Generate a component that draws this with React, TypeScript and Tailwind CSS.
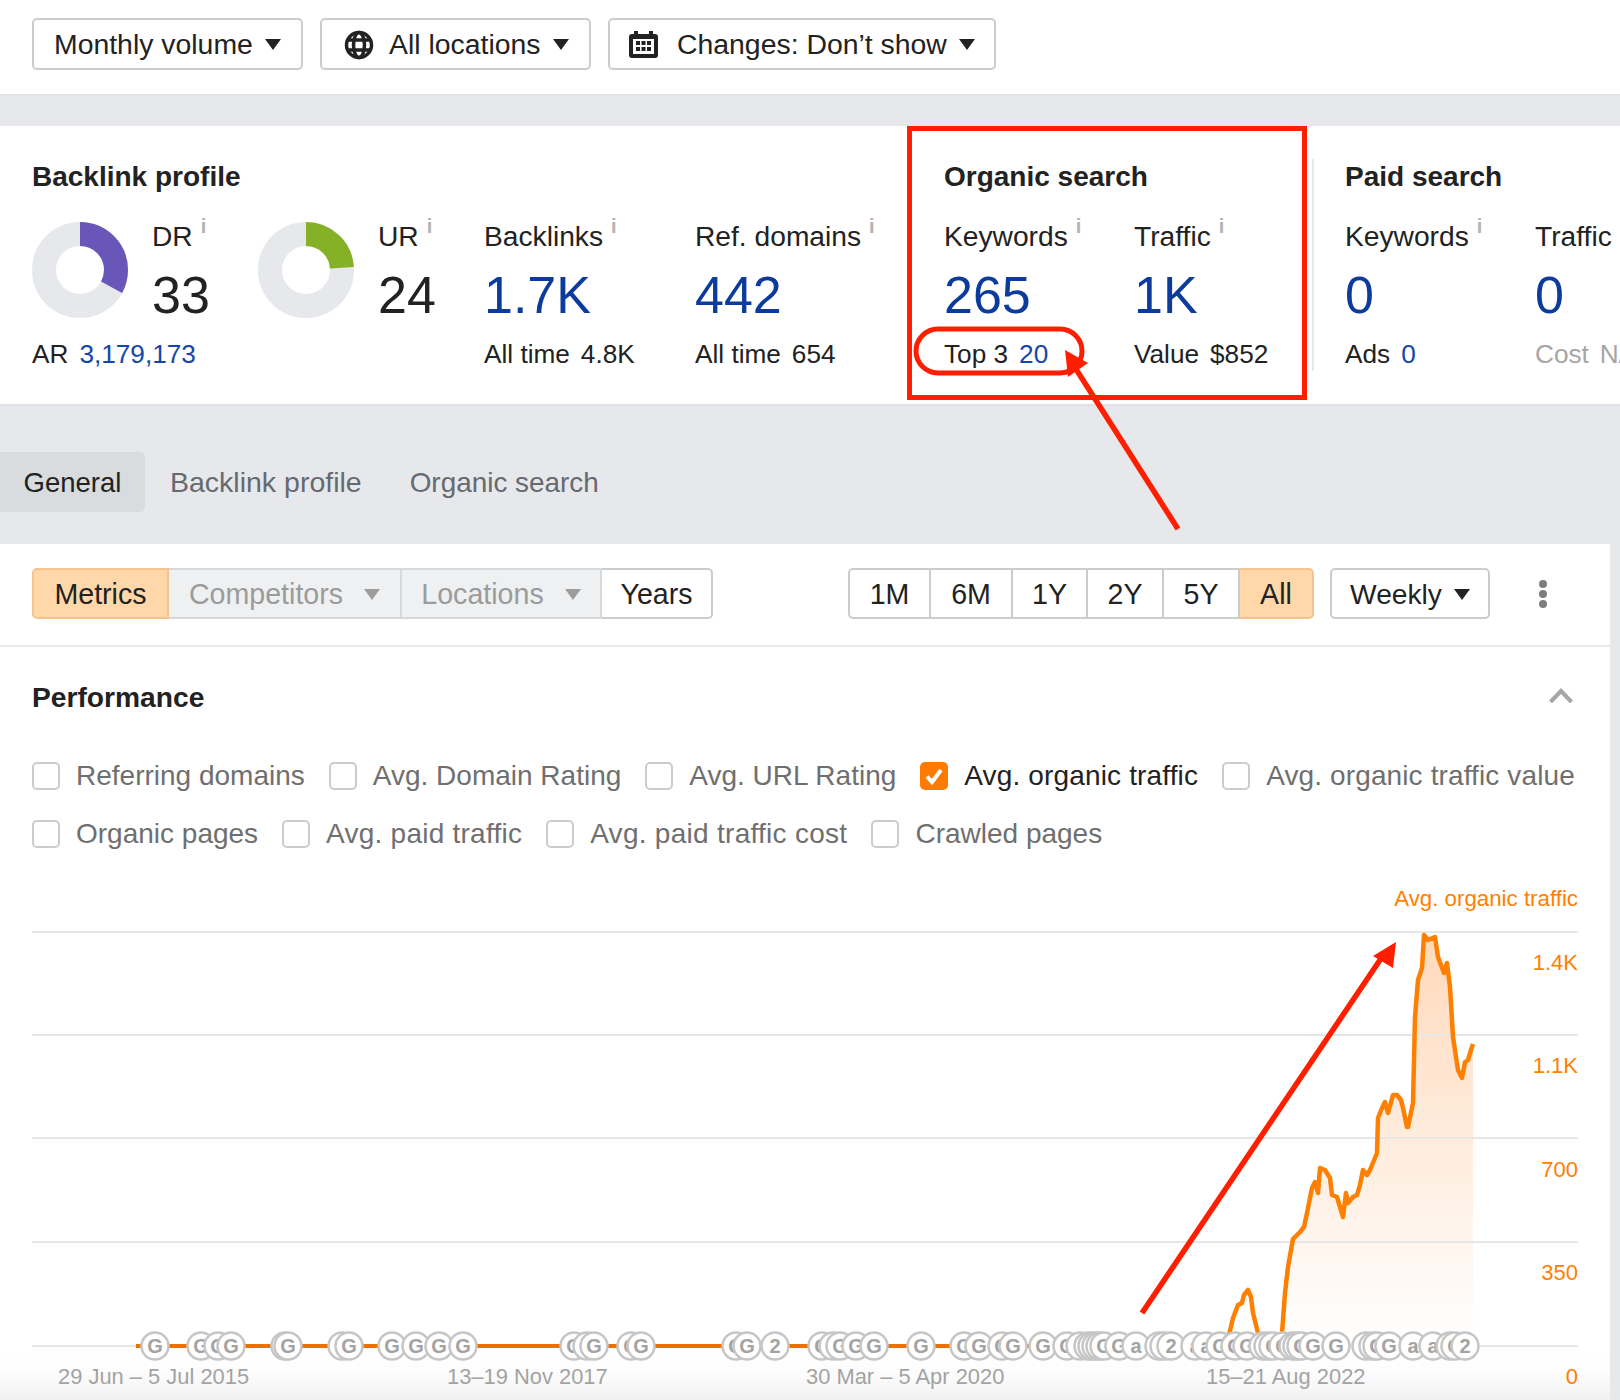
const marks: [number, string][] = [
  [155, "G"], [201, "G"], [218, "G"], [231, "G"], [285, "G"], [288, "G"], [342, "G"], [349, "G"],
  [392, "G"], [416, "G"], [439, "G"], [463, "G"], [574, "G"], [587, "G"], [594, "G"], [631, "G"],
  [641, "G"], [736, "G"], [747, "G"], [775, "2"], [822, "G"], [833, "G"], [840, "G"], [856, "G"],
  [874, "G"], [921, "G"], [964, "G"], [979, "G"], [1002, "G"], [1013, "G"], [1043, "G"], [1067, "G"],
  [1080, "a"], [1088, "G"], [1092, "G"], [1096, "2"], [1100, "G"], [1104, "G"], [1119, "G"], [1136, "a"],
  [1159, "G"], [1164, "G"], [1171, "2"], [1195, "a"], [1206, "a"], [1220, "G"], [1235, "G"], [1247, "G"],
  [1263, "G"], [1268, "G"], [1273, "G"], [1283, "G"], [1293, "G"], [1297, "G"], [1301, "G"], [1313, "G"],
  [1336, "G"], [1366, "G"], [1373, "G"], [1377, "G"], [1389, "G"], [1413, "a"], [1433, "a"], [1450, "G"],
  [1455, "G"], [1465, "2"],
];

const bump =
  "M1229 1335L1233 1318L1238 1305L1242 1303L1244 1295L1248 1290L1251 1297L1253 1313L1258 1333";
const rise =
  "L1285 1293L1288 1267L1293 1239L1300 1232L1304 1227L1307 1213L1312 1188L1315 1182L1318 1193L1320 1168L1325 1170L1330 1178L1332 1195L1337 1197L1343 1217L1346 1193L1348 1203L1353 1197L1357 1195L1360 1185L1363 1170L1367 1175L1370 1170L1377 1153L1378 1118L1382 1108L1385 1102L1388 1113L1393 1095L1397 1095L1401 1100L1403 1108L1407 1127L1408 1127L1413 1103L1415 1017L1418 980L1422 968L1424 935L1428 940L1435 937L1438 957L1444 973L1447 963L1450 987L1453 1037L1456 1057L1458 1070L1462 1078L1465 1062L1468 1060L1471 1050L1473 1044";

const Caret = ({ color = "#222222" }: { color?: string }) => (
  <svg width="16" height="11" viewBox="0 0 16 11" className="shrink-0">
    <path d="M0 0h16L8 11z" fill={color} />
  </svg>
);

const Globe = () => (
  <svg width="30" height="30" viewBox="0 0 30 30" fill="none" stroke="#222222" strokeWidth="3.500">
    <circle cx="15" cy="15" r="12.500" />
    <ellipse cx="15" cy="15" rx="5.500" ry="12.500" />
    <path d="M4 10h22M4 20h22" />
  </svg>
);

const Calendar = () => (
  <svg width="29" height="27" viewBox="0 0 29 27">
    <path
      d="M5 0h4v3h11V0h4v3h2a3 3 0 0 1 3 3v18a3 3 0 0 1-3 3H3a3 3 0 0 1-3-3V6a3 3 0 0 1 3-3h2z"
      fill="#222222"
    />
    <rect x="4" y="8" width="21" height="15" fill="#ffffff" />
    <path
      d="M7 10h4v4H7zM12.500 10h4v4h-4zM18 10h4v4h-4zM7 16h4v4H7zM12.500 16h4v4h-4zM18 16h4v4h-4z"
      fill="#222222"
    />
  </svg>
);

const TopButton = ({ width, children }: { width: string; children: React.ReactNode }) => (
  <div
    className={`${width} flex h-[52px] items-center rounded-[5px] border-2 border-[#cccccc] bg-white pt-[1px] text-[28.4px] text-[#222222]`}
  >
    {children}
  </div>
);

const Donut = ({ pct, color }: { pct: number; color: string }) => (
  <svg width="96" height="96" viewBox="0 0 96 96" className="mt-[6px] shrink-0">
    <circle cx="48" cy="48" r="36" fill="none" stroke="#e6e8ec" strokeWidth="24" />
    <circle
      cx="48"
      cy="48"
      r="36"
      fill="none"
      stroke={color}
      strokeWidth="24"
      pathLength="100"
      strokeDasharray={`${pct} 100`}
      transform="rotate(-90 48 48)"
    />
  </svg>
);

const Label = ({ text }: { text: string }) => (
  <div className="flex h-10 items-center whitespace-nowrap text-[28.2px] leading-10 text-[#222222]">
    {text}
    <span className="mb-[20px] ml-2 text-[20px] font-bold leading-[17px] text-[#b3b3b3]">i</span>
  </div>
);

const Value = ({ text, dark }: { text: string; dark?: boolean }) => (
  <div className={`mt-[9px] h-[60px] text-[52px] leading-[60px] ${dark ? "text-[#222222]" : "text-[#0b3b9c]"}`}>
    {text}
  </div>
);

const Sub = ({ label, value, blue, muted }: { label: string; value: string; blue?: boolean; muted?: boolean }) => (
  <div className={`mt-[11px] flex h-9 gap-[11px] whitespace-nowrap text-[26.2px] leading-9 ${muted ? "text-[#a6a6a6]" : "text-[#222222]"}`}>
    <span>{label}</span>
    <span className={blue ? "text-[#1546ab]" : ""}>{value}</span>
  </div>
);

const Stat = ({
  width,
  label,
  value,
  sub,
  subValue,
  blue,
  muted,
}: {
  width: string;
  label: string;
  value: string;
  sub: string;
  subValue: string;
  blue?: boolean;
  muted?: boolean;
}) => (
  <div className={`${width} shrink-0`}>
    <Label text={label} />
    <Value text={value} />
    <Sub label={sub} value={subValue} blue={blue} muted={muted} />
  </div>
);

const Heading = ({ text }: { text: string }) => (
  <h2 className="mb-[21px] h-9 whitespace-nowrap text-[28px] font-bold leading-9 text-[#222222]">{text}</h2>
);

const Check = ({ label, checked, track = "" }: { label: string; checked?: boolean; track?: string }) => (
  <div className="flex items-center gap-4 whitespace-nowrap">
    {checked ? (
      <svg width="28" height="28" viewBox="0 0 28 28" className="shrink-0">
        <rect width="28" height="28" rx="5" fill="#ff7a00" />
        <path d="M7 14.500l5 5.500 9-12" fill="none" stroke="#ffffff" strokeWidth="4" />
      </svg>
    ) : (
      <span className="h-7 w-7 shrink-0 rounded-[5px] border-2 border-[#cccccc] bg-white" />
    )}
    <span className={`${track} ${checked ? "text-[#222222]" : "text-[#6f6f6f]"}`}>{label}</span>
  </div>
);

const ranges = [
  { t: "1M", w: "w-[83px]" },
  { t: "6M", w: "w-[82px]" },
  { t: "1Y", w: "w-[75px]" },
  { t: "2Y", w: "w-[76px]" },
  { t: "5Y", w: "w-[76px]" },
];

const Chart = () => (
  <svg width="1610" height="530" viewBox="0 870 1610 530" className="block">
    <defs>
      <linearGradient id="area" gradientUnits="userSpaceOnUse" x1="0" y1="932" x2="0" y2="1346">
        <stop offset="0" stopColor="#ffd9bb" />
        <stop offset="1" stopColor="#ffffff" />
      </linearGradient>
      <linearGradient id="fade" x1="0" y1="0" x2="0" y2="1">
        <stop offset="0" stopColor="#ffffff" stopOpacity="0" />
        <stop offset="1" stopColor="#f0f0f0" />
      </linearGradient>
    </defs>
    <rect x="0" y="1350" width="1610" height="50" fill="url(#fade)" />
    <path d={`M1282 1346L1282 1333${rise}L1473 1346z`} fill="url(#area)" />
    {[932, 1035, 1138, 1242, 1346].map((y) => (
      <line key={y} x1="32" x2="1578" y1={y} y2={y} stroke="#e6e6e6" strokeWidth="2" />
    ))}
    <line x1="136" x2="1229" y1="1346" y2="1346" stroke="#ee7100" strokeWidth="4" />
    <path d={bump} fill="none" stroke="#ff7f00" strokeWidth="4.500" strokeLinejoin="round" />
    <path d={`M1282 1333${rise}`} fill="none" stroke="#ff7f00" strokeWidth="4.500" strokeLinejoin="round" />
    <g fontSize="22" fill="#ff7f00" textAnchor="end">
      <text x="1578" y="906" fontSize="22.300">Avg. organic traffic</text>
      <text x="1578" y="970">1.4K</text>
      <text x="1578" y="1073">1.1K</text>
      <text x="1578" y="1177">700</text>
      <text x="1578" y="1280">350</text>
      <text x="1578" y="1384">0</text>
    </g>
    <g fontSize="21.900" fill="#a3a3a3">
      <text x="58" y="1384">29 Jun – 5 Jul 2015</text>
      <text x="447" y="1384">13–19 Nov 2017</text>
      <text x="806" y="1384">30 Mar – 5 Apr 2020</text>
      <text x="1206" y="1384">15–21 Aug 2022</text>
    </g>
    {marks.map(([x, letter], i) => (
      <g key={i}>
        <circle cx={x} cy="1346" r="13.500" fill="#ffffff" stroke="#c6c6c6" strokeWidth="2.500" />
        <text x={x} y="1353" textAnchor="middle" fontSize="20" fontWeight="700" fill="#a3a3a3">
          {letter}
        </text>
      </g>
    ))}
  </svg>
);

const App = () => {
  return (
    <div className="relative h-[1400px] w-[1620px] overflow-hidden bg-[#e6e8ec] font-['Liberation_Sans',Arial,sans-serif]">
      <div className="flex h-[96px] gap-[17px] border-b-2 border-[#e0e2e6] bg-white pl-8 pt-[18px]">
        <TopButton width="w-[271px]">
          <span className="ml-5 whitespace-nowrap">Monthly volume</span>
          <span className="ml-3"><Caret /></span>
        </TopButton>
        <TopButton width="w-[271px]">
          <span className="ml-[22px]"><Globe /></span>
          <span className="ml-[15px] whitespace-nowrap">All locations</span>
          <span className="ml-3"><Caret /></span>
        </TopButton>
        <TopButton width="w-[388px]">
          <span className="ml-[19px]"><Calendar /></span>
          <span className="ml-[19px] whitespace-nowrap">Changes: Don’t show</span>
          <span className="ml-3"><Caret /></span>
        </TopButton>
      </div>

      <div className="mt-[30px] flex h-[280px] border-b-2 border-[#e0e2e6] bg-white pl-8 pt-[33px]">
        <div className="w-[912px] shrink-0">
          <Heading text="Backlink profile" />
          <div className="flex">
            <div className="w-[226px] shrink-0">
              <div className="flex">
                <Donut pct={33} color="#6857b8" />
                <div className="ml-6">
                  <Label text="DR" />
                  <Value text="33" dark />
                </div>
              </div>
              <Sub label="AR" value="3,179,173" blue />
            </div>
            <div className="flex w-[226px] shrink-0">
              <Donut pct={24} color="#84b125" />
              <div className="ml-6">
                <Label text="UR" />
                <Value text="24" dark />
              </div>
            </div>
            <Stat width="w-[211px]" label="Backlinks" value="1.7K" sub="All time" subValue="4.8K" />
            <Stat width="w-[249px]" label="Ref. domains" value="442" sub="All time" subValue="654" />
          </div>
        </div>

        <div className="w-[368px] shrink-0">
          <Heading text="Organic search" />
          <div className="flex">
            <Stat width="w-[190px]" label="Keywords" value="265" sub="Top 3" subValue="20" blue />
            <Stat width="w-[178px]" label="Traffic" value="1K" sub="Value" subValue="$852" />
          </div>
        </div>

        <div className="h-[212px] w-0.5 shrink-0 bg-[#e8e8e8]" />

        <div className="ml-[31px] shrink-0">
          <Heading text="Paid search" />
          <div className="flex">
            <Stat width="w-[190px]" label="Keywords" value="0" sub="Ads" subValue="0" blue />
            <Stat width="w-[120px]" label="Traffic" value="0" sub="Cost" subValue="N/A" muted />
          </div>
        </div>
      </div>

      <div className="flex h-[138px] pt-[46px]">
        <div className="flex h-[60px] w-[145px] items-center justify-center rounded-r-[5px] bg-[#d8dcdf] pt-[1px] text-[27.5px] text-[#222222]">
          General
        </div>
        <div className="ml-px flex h-[60px] items-center px-6 pt-[1px] text-[28.5px] text-[#666a6e]">Backlink profile</div>
        <div className="flex h-[60px] items-center px-6 pt-[1px] text-[27.9px] text-[#666a6e]">Organic search</div>
      </div>

      <div className="h-[856px] w-[1610px] bg-white">
        <div className="flex h-[103px] items-start border-b-2 border-[#e8e8e8] pl-8 pt-6 text-[28.6px]">
          <div className="flex h-[51px]">
            <div className="flex w-[137px] items-center justify-center rounded-l-[5px] border-2 border-[#f5c48e] bg-[#ffd7a8] pt-[2px] text-[#222222]">
              Metrics
            </div>
            <div className="flex w-[233px] items-center justify-center gap-[21px] border-y-2 border-r-2 border-[#d6d9dc] bg-[#eff0f2] pt-[2px] text-[#9b9b9b]">
              Competitors
              <Caret color="#9d9d9d" />
            </div>
            <div className="flex w-[200px] items-center justify-center gap-[21px] border-y-2 border-r-2 border-[#d6d9dc] bg-[#eff0f2] pt-[2px] text-[#9b9b9b]">
              Locations
              <Caret color="#9d9d9d" />
            </div>
            <div className="flex w-[111px] items-center justify-center rounded-r-[5px] border-y-2 border-r-2 border-[#cccccc] bg-white pt-[2px] text-[#222222]">
              Years
            </div>
          </div>

          <div className="ml-[135px] flex h-[51px]">
            {ranges.map((r, i) => (
              <div
                key={r.t}
                className={`${r.w} flex items-center justify-center border-y-2 border-r-2 border-[#cccccc] pt-[2px] text-[#222222] ${
                  i === 0 ? "rounded-l-[5px] border-l-2" : ""
                }`}
              >
                {r.t}
              </div>
            ))}
            <div className="flex w-[74px] items-center justify-center rounded-r-[5px] border-2 border-l-0 border-[#f5c48e] bg-[#ffd7a8] pt-[2px] text-[#222222]">
              All
            </div>
          </div>

          <div className="ml-4 flex h-[51px] w-40 items-center justify-center gap-3 rounded-[5px] border-2 border-[#cccccc] pt-[2px] text-[28.2px] text-[#222222]">
            Weekly
            <Caret />
          </div>

          <div className="ml-[49px] flex h-[51px] flex-col items-center justify-center gap-[2px]">
            <span className="h-2 w-2 rounded-full bg-[#7d7d7d]" />
            <span className="h-2 w-2 rounded-full bg-[#7d7d7d]" />
            <span className="h-2 w-2 rounded-full bg-[#7d7d7d]" />
          </div>
        </div>

        <div className="flex h-[100px] items-center justify-between pl-8 pr-[37px]">
          <h2 className="text-[28.2px] font-bold text-[#222222]">Performance</h2>
          <svg width="24" height="15" viewBox="0 0 24 15" fill="none" stroke="#a6a6a6" strokeWidth="4" className="mb-1">
            <path d="M1.500 14L12 3l10.500 11" />
          </svg>
        </div>

        <div className="pl-8 text-[28px]">
          <div className="flex h-[58px] items-center gap-6">
            <Check label="Referring domains" />
            <Check label="Avg. Domain Rating" />
            <Check label="Avg. URL Rating" />
            <Check label="Avg. organic traffic" checked track="tracking-[0.15px]" />
            <Check label="Avg. organic traffic value" track="tracking-[0.12px]" />
          </div>
          <div className="flex h-[58px] items-center gap-6">
            <Check label="Organic pages" />
            <Check label="Avg. paid traffic" track="tracking-[0.24px]" />
            <Check label="Avg. paid traffic cost" track="tracking-[0.28px]" />
            <Check label="Crawled pages" />
          </div>
        </div>

        <div className="mt-[7px]">
          <Chart />
        </div>
      </div>

      {/* red markup drawn on top of the screenshot */}
      <svg width="1620" height="1400" viewBox="0 0 1620 1400" className="pointer-events-none absolute left-0 top-0">
        <rect x="909.500" y="128.500" width="395" height="269" fill="none" stroke="#ff1f00" strokeWidth="5" />
        <rect x="916" y="329" width="166" height="44" rx="22" fill="none" stroke="#ff1f00" strokeWidth="5" />
        <path d="M1178 529L1074 366" fill="none" stroke="#ff1f00" strokeWidth="5.500" />
        <path d="M1065 350L1088 363L1068 377z" fill="#ff1f00" />
        <path d="M1142 1313L1382 957" fill="none" stroke="#ff1f00" strokeWidth="5.500" />
        <path d="M1396 942L1393 968L1373 956z" fill="#ff1f00" />
      </svg>
    </div>
  );
};

export default App;
